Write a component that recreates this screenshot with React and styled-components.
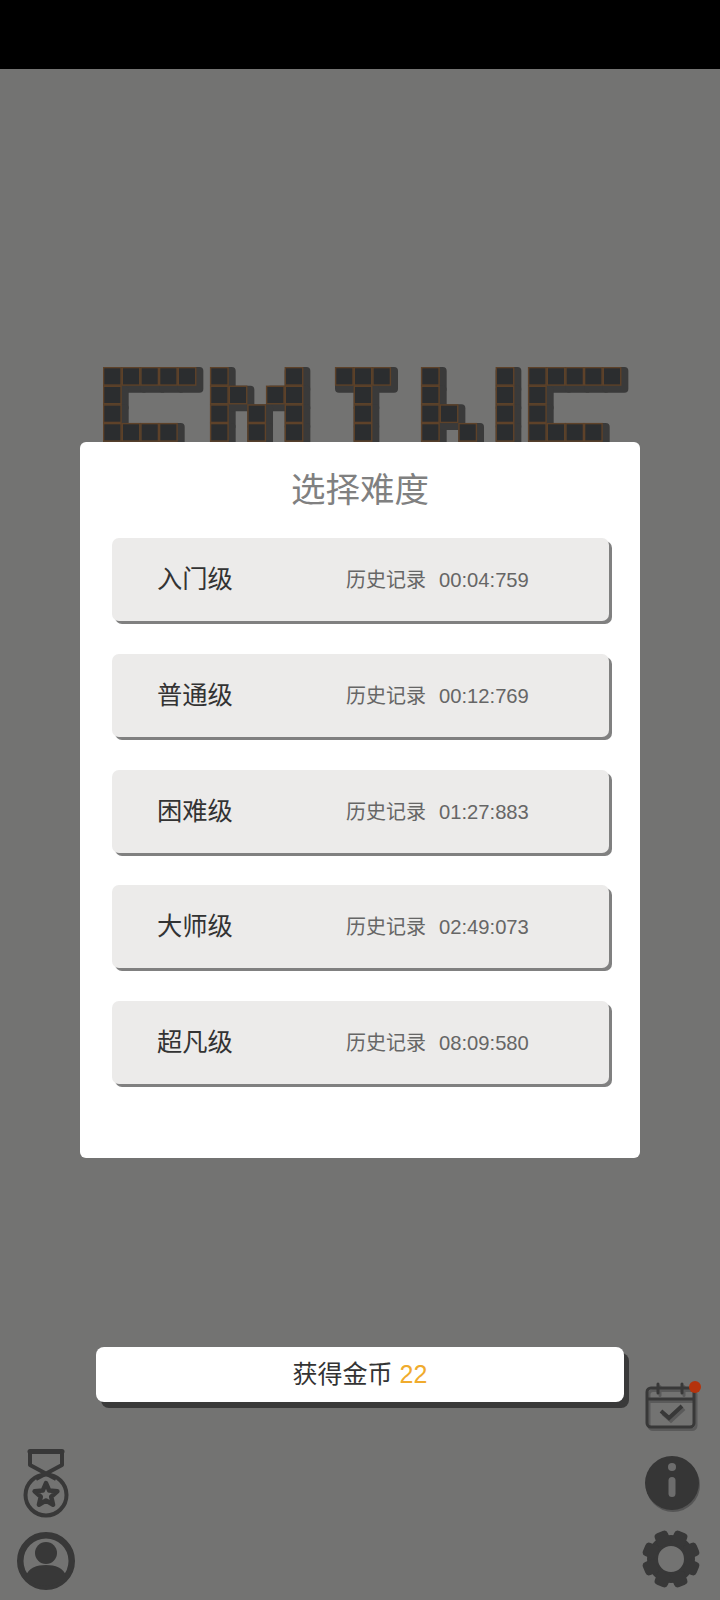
import React from 'react';
import styled, { createGlobalStyle } from 'styled-components';

const levels = [
  { name: '入门级', time: '00:04:759' },
  { name: '普通级', time: '00:12:769' },
  { name: '困难级', time: '01:27:883' },
  { name: '大师级', time: '02:49:073' },
  { name: '超凡级', time: '08:09:580' },
];

// logo tiles per letter: [col, row]
const TILE = 18.67;
const E = [[0,0],[1,0],[2,0],[3,0],[4,0],[0,1],[0,2],[0,3],[1,3],[2,3],[3,3]];
const M = [[0,0],[0,1],[0,2],[0,3],[1,1],[3,1],[2,2],[2,3],[4,0],[4,1],[4,2],[4,3]];
const T = [[0,0],[1,0],[2,0],[1,1],[1,2],[1,3]];
const N = [[0,0],[0,1],[0,2],[0,3],[1,2],[2,3],[4,0],[4,1],[4,2],[4,3]];
const letters = [
  { x: 0, tiles: E },
  { x: 107, tiles: M },
  { x: 232, tiles: T },
  { x: 318, tiles: N },
  { x: 425, tiles: E },
];

function Logo() {
  const all = letters.flatMap((l) =>
    l.tiles.map(([c, r]) => ({ x: l.x + c * TILE, y: r * TILE }))
  );
  return (
    <LogoArt width="540" height="96" viewBox="0 0 540 96">
      {all.map((t, i) => (
        <rect key={i} x={t.x} y={t.y} width={TILE + 7} height={TILE + 7} rx="4" fill="#3a3a3a" />
      ))}
      {all.map((t, i) => (
        <rect
          key={i}
          x={t.x + 0.6}
          y={t.y + 0.6}
          width={TILE - 1.2}
          height={TILE - 1.2}
          fill="#2b2d2f"
          stroke="#5e4229"
          strokeWidth="1.4"
        />
      ))}
    </LogoArt>
  );
}

function starPoints(cx, cy, outer, inner) {
  const pts = [];
  for (let i = 0; i < 10; i++) {
    const r = i % 2 ? inner : outer;
    const a = (Math.PI / 5) * i - Math.PI / 2;
    pts.push(`${(cx + r * Math.cos(a)).toFixed(1)},${(cy + r * Math.sin(a)).toFixed(1)}`);
  }
  return pts.join(' ');
}

function Medal() {
  return (
    <svg width="60" height="74" viewBox="0 0 60 74" fill="none" stroke="#383838">
      <path d="M14 4H46V17L20 31M14 4V17L40 31" strokeWidth="4" strokeLinejoin="round" />
      <path d="M14 3.5H46" strokeWidth="5" strokeLinecap="round" />
      <circle cx="30" cy="47" r="20.5" strokeWidth="4" />
      <polygon points={starPoints(30, 47, 12, 5.5)} strokeWidth="4.5" strokeLinejoin="round" />
    </svg>
  );
}

function Person() {
  return (
    <svg width="60" height="60" viewBox="0 0 60 60" fill="#383838">
      <circle cx="30" cy="30" r="25.75" fill="none" stroke="#383838" strokeWidth="6.5" />
      <circle cx="30" cy="22" r="11" />
      <path d="M10 45C12 37 21 34 30 34C39 34 48 37 50 45A25 25 0 0 1 10 45Z" />
    </svg>
  );
}

function Calendar() {
  const strokes = (
    <>
      <rect x="5" y="9" width="47" height="39" rx="4" strokeWidth="3" />
      <path d="M5 20H52" strokeWidth="3" />
      <path d="M16 5V14M40 5V14" strokeWidth="3" strokeLinecap="round" />
      <path d="M19 32L27 39L40 27" strokeWidth="4" />
    </>
  );
  return (
    <svg width="60" height="60" viewBox="0 0 60 60" fill="none">
      <g stroke="#5a5a5a" transform="translate(2 2.5)">{strokes}</g>
      <g stroke="#383838">{strokes}</g>
    </svg>
  );
}

function Info() {
  return (
    <svg width="60" height="60" viewBox="0 0 60 60">
      <circle cx="31" cy="31" r="27" fill="#555555" />
      <circle cx="30" cy="29" r="27" fill="#363636" />
      <circle cx="30" cy="13" r="4" fill="#6d6d6d" />
      <rect x="26.5" y="23" width="7" height="20" rx="3.5" fill="#6d6d6d" />
    </svg>
  );
}

function Gear() {
  const teeth = [22.5, 67.5, 112.5, 157.5, 202.5, 247.5, 292.5, 337.5];
  return (
    <svg width="60" height="60" viewBox="0 0 60 60" fill="#383838">
      <circle cx="29" cy="30" r="18.5" fill="none" stroke="#383838" strokeWidth="11" />
      {teeth.map((a) => (
        <rect key={a} x="22" y="1" width="14" height="14" rx="4" transform={`rotate(${a} 29 30)`} />
      ))}
    </svg>
  );
}

export default function App() {
  return (
    <>
      <GlobalStyle />
      <Screen>
        <StatusBar />
        <LogoWrap>
          <Logo />
        </LogoWrap>
        <Footer>
          <LeftIcons>
            <Medal />
            <Person />
          </LeftIcons>
          <CoinBar>
            获得金币 <Coins>22</Coins>
          </CoinBar>
          <RightIcons>
            <CalendarWrap>
              <Calendar />
              <Badge />
            </CalendarWrap>
            <Info />
            <Gear />
          </RightIcons>
        </Footer>
        <Dialog>
          <Title>选择难度</Title>
          <LevelList>
            {levels.map((l) => (
              <LevelCard key={l.name}>
                <LevelName>{l.name}</LevelName>
                <RecordLabel>历史记录</RecordLabel>
                <RecordTime>{l.time}</RecordTime>
              </LevelCard>
            ))}
          </LevelList>
        </Dialog>
      </Screen>
    </>
  );
}

const GlobalStyle = createGlobalStyle`
  html, body {
    margin: 0;
    padding: 0;
    background: #737373;
    font-family: "Liberation Sans", "Noto Sans CJK SC", sans-serif;
  }
`;

const Screen = styled.div`
  position: relative;
  width: 720px;
  height: 1600px;
  display: flex;
  flex-direction: column;
  background: #737372;
  overflow: hidden;
`;

const StatusBar = styled.div`
  height: 69px;
  background: #000;
`;

const LogoWrap = styled.div`
  padding: 298px 0 0 103px;
  height: 96px;
`;

const LogoArt = styled.svg`
  display: block;
  filter: blur(0.6px);
`;

const Dialog = styled.section`
  position: absolute;
  top: 442px;
  left: 80px;
  width: 560px;
  height: 716px;
  box-sizing: border-box;
  padding: 24px 32px 0;
  background: #fff;
  border-radius: 6px;
`;

const Title = styled.h2`
  margin: 0;
  height: 48px;
  line-height: 48px;
  text-align: center;
  font-size: 34.5px;
  font-weight: 400;
  color: #808080;
`;

const LevelList = styled.div`
  display: flex;
  flex-direction: column;
  gap: 32.8px;
  margin-top: 24px;
`;

const LevelCard = styled.div`
  display: flex;
  align-items: center;
  height: 83px;
  width: 497px;
  box-sizing: border-box;
  padding-left: 45px;
  background: #ecebea;
  border-radius: 7px;
  box-shadow: 3px 3px 0 #808080;
`;

const LevelName = styled.span`
  width: 189px;
  padding-bottom: 5px;
  font-size: 25.3px;
  color: #333;
`;

const RecordLabel = styled.span`
  width: 93px;
  padding-bottom: 2px;
  font-size: 20px;
  color: #666;
`;

const RecordTime = styled.span`
  padding-top: 2px;
  font-size: 20.2px;
  color: #666;
`;

const Footer = styled.div`
  margin-top: auto;
  display: flex;
  align-items: flex-start;
  height: 254px;
`;

const LeftIcons = styled.div`
  width: 96px;
  height: 100%;
  box-sizing: border-box;
  padding: 102px 0 0 16px;
  display: flex;
  flex-direction: column;
  gap: 9px;
`;

const CoinBar = styled.div`
  width: 528px;
  height: 55px;
  margin-top: 1px;
  line-height: 55px;
  text-align: center;
  background: #fff;
  border-radius: 8px;
  box-shadow: 5px 6px 0 #3a3a3a;
  font-size: 25px;
  color: #333;
`;

const Coins = styled.span`
  color: #f0ab2d;
`;

const RightIcons = styled.div`
  width: 96px;
  box-sizing: border-box;
  padding-top: 33px;
  display: flex;
  flex-direction: column;
  align-items: center;
  gap: 15px;

  svg {
    display: block;
  }
`;

const CalendarWrap = styled.div`
  position: relative;
  width: 60px;
  height: 60px;
`;

const Badge = styled.span`
  position: absolute;
  left: 47px;
  top: 2px;
  width: 12px;
  height: 12px;
  border-radius: 50%;
  background: #b5330c;
`;
